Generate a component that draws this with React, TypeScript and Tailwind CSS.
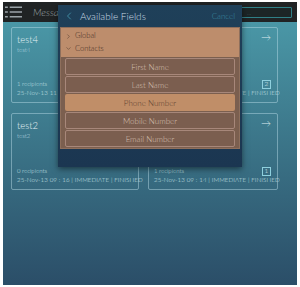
import { ChevronLeft, ChevronRight, ChevronDown } from "lucide-react";

type Msg = {
  title: string;
  recipients: string;
  time: string;
  badge?: string;
};

const MESSAGES: Msg[] = [
  { title: "test4", recipients: "1 recipients", time: "25-Nov-13 11 : 02 | IMMEDIATE | FINISHED" },
  { title: "test3", recipients: "2 recipients", time: "25-Nov-13 10 : 40 | IMMEDIATE | FINISHED", badge: "2" },
  { title: "test2", recipients: "0 recipients", time: "25-Nov-13 09 : 16 | IMMEDIATE | FINISHED" },
  { title: "test1", recipients: "1 recipients", time: "25-Nov-13 09 : 14 | IMMEDIATE | FINISHED", badge: "1" },
];

const FIELDS = ["First Name", "Last Name", "Phone Number", "Mobile Number", "Email Number"];

function MenuIcon() {
  return (
    <svg viewBox="0 0 18 12" className="w-[17px] h-[12px]" fill="none" stroke="#9aa3a8" strokeWidth="1.4">
      <path d="M0 1h3M5 1h13M0 6h3M5 6h13M0 11h3M5 11h13" />
    </svg>
  );
}

function MessageCard({ msg }: { msg: Msg }) {
  return (
    <div className="relative flex flex-col rounded-[2px] border border-[rgba(190,225,235,0.45)] pl-[5px] pr-[3px] pt-[6px] pb-[5px] text-[#e4f1f4]">
      <span className="text-[9.5px] leading-[11px]">{msg.title}</span>
      <span className="text-[6px] leading-[9px] text-[#bcd9e0]">{msg.title}</span>
      <div className="flex-1" />
      <span className="text-[6px] leading-[9px] text-[#c6e0e6]">{msg.recipients}</span>
      <span className="text-[6.2px] leading-[9px] tracking-[0.1px] whitespace-nowrap text-[#cfe5ea]">{msg.time}</span>
      <span className="absolute right-[6px] top-[4px] text-[10px] leading-[10px] text-[#dcecf0]">→</span>
      {msg.badge && (
        <span className="absolute right-[6px] bottom-[13px] w-[9px] h-[9px] flex items-center justify-center border border-[#8fd0de] text-[6.5px] leading-none text-[#e0f2f6]">
          {msg.badge}
        </span>
      )}
    </div>
  );
}

export default function App() {
  return (
    <div
      className="w-[300px] h-[287px] bg-white pl-[3px] pr-[3px] pt-[2px] pb-[2px]"
      style={{ fontFamily: "Lato, 'Open Sans', sans-serif", fontWeight: 300 }}
    >
      <div className="relative w-full h-full flex flex-col overflow-hidden">
        {/* Top bar */}
        <div className="h-[20px] shrink-0 flex items-center bg-[#202324] pl-[2px] pr-[5px]">
          <MenuIcon />
          <span className="ml-[11px] text-[10px] text-[#9ca4a8] italic">Messages</span>
          <div className="flex-1" />
          <div className="w-[60px] h-[11px] rounded-[1px] border border-[#2f7f86] bg-[#1c2526] flex items-center pl-[14px] text-[6px] text-[#4a6a70]">
            ...
          </div>
        </div>

        {/* Content */}
        <div className="flex-1 bg-gradient-to-b from-[#4a97a6] via-[#3a7286] to-[#2b4e68] pl-[8px] pt-[5px]">
          <div className="grid grid-cols-[128px_130px] grid-rows-[76px_77px] gap-x-[9px] gap-y-[10px]">
            {MESSAGES.map((m) => (
              <MessageCard key={m.title} msg={m} />
            ))}
          </div>
        </div>

        {/* Available Fields popover */}
        <div className="absolute left-[55px] top-[3px] w-[184px] h-[162px] flex flex-col bg-gradient-to-b from-[#1f4059] to-[#1b3651] shadow-[0_2px_6px_rgba(0,0,0,0.5)]">
          <div className="h-[22px] shrink-0 flex items-center pl-[5px] pr-[7px]">
            <ChevronLeft className="w-[12px] h-[12px] text-[#4aa2b8]" strokeWidth={1.5} />
            <span className="ml-[5px] text-[10px] text-[#c8dbe4]">Available Fields</span>
            <div className="flex-1" />
            <span className="text-[8px] text-[#3b8ba2]">Cancel</span>
          </div>
          <div className="mx-[2px] h-[122px] bg-[#7b5f4f] border border-[#8e6f5c] flex flex-col">
            <div className="bg-[#bd8d6c] pl-[4px] pt-[2px] pb-[2px] text-[#3f2c22]">
              <div className="flex items-center h-[12px] text-[7.5px]">
                <ChevronRight className="w-[7px] h-[7px]" strokeWidth={1.5} />
                <span className="ml-[3px]">Global</span>
              </div>
              <div className="flex items-center h-[13px] text-[7.5px]">
                <ChevronDown className="w-[7px] h-[7px]" strokeWidth={1.5} />
                <span className="ml-[3px]">Contacts</span>
              </div>
            </div>
            <div className="flex flex-col gap-[1px] px-[4px] pt-[1px]">
              {FIELDS.map((f) => (
                <div
                  key={f}
                  className={
                    f === "Phone Number"
                      ? "h-[17px] flex items-center justify-center rounded-[2px] bg-[#c08e68] text-[8px] text-[#5c3f2f]"
                      : "h-[17px] flex items-center justify-center rounded-[2px] border border-[#a7877a] bg-[#7b5e4f] text-[8px] text-[#d9c3b5]"
                  }
                >
                  {f}
                </div>
              ))}
            </div>
          </div>
        </div>
      </div>
    </div>
  );
}
